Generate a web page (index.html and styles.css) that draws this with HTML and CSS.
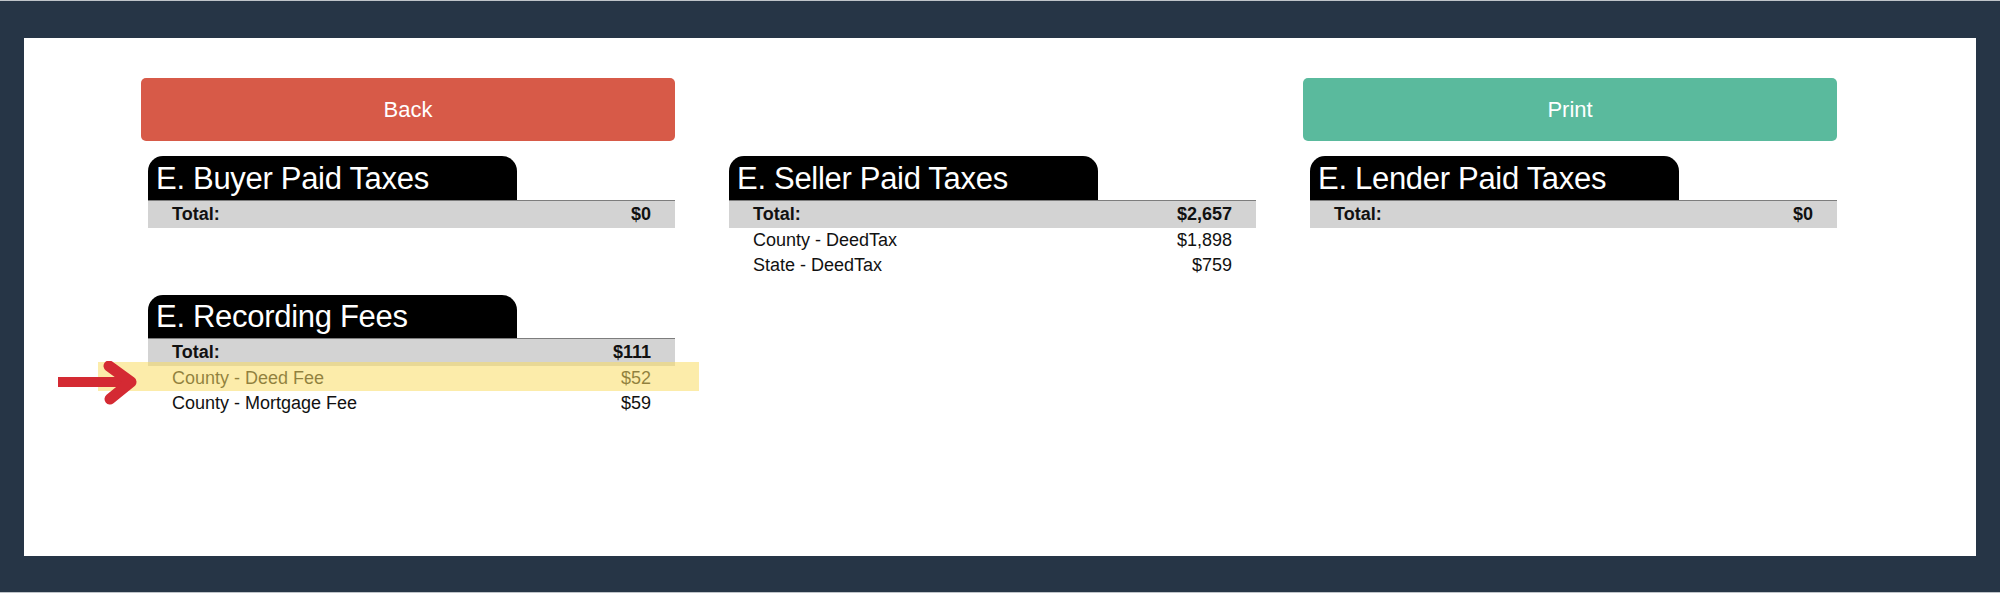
FILE: index.html
```html
<!DOCTYPE html>
<html lang="en">
<head>
<meta charset="utf-8">
<title>Taxes and Recording Fees</title>
<link rel="stylesheet" href="styles.css">
</head>
<body>
<div class="frame">
  <main class="panel">
    <div class="grid">
      <button class="btn btn-back" type="button">Back</button>
      <div class="spacer"></div>
      <button class="btn btn-print" type="button">Print</button>

      <div class="col">
        <section class="fees">
          <h2 class="tab">E. Buyer Paid Taxes</h2>
          <div class="row total"><span>Total:</span><span>$0</span></div>
        </section>
        <section class="fees fees-recording">
          <h2 class="tab">E. Recording Fees</h2>
          <div class="row total"><span>Total:</span><span>$111</span></div>
          <div class="row marked">
            <span>County - Deed Fee</span><span>$52</span>
            <span class="highlight"></span>
            <svg class="pointer" width="80" height="44" viewBox="0 0 80 44" aria-hidden="true">
              <line x1="0" y1="21" x2="70" y2="21" stroke="#d42a33" stroke-width="10"/>
              <polyline points="51,5 73,21 52,38" fill="none" stroke="#d42a33" stroke-width="11" stroke-linecap="round" stroke-linejoin="round"/>
            </svg>
          </div>
          <div class="row"><span>County - Mortgage Fee</span><span>$59</span></div>
        </section>
      </div>

      <div class="col">
        <section class="fees">
          <h2 class="tab">E. Seller Paid Taxes</h2>
          <div class="row total"><span>Total:</span><span>$2,657</span></div>
          <div class="row"><span>County - DeedTax</span><span>$1,898</span></div>
          <div class="row"><span>State - DeedTax</span><span>$759</span></div>
        </section>
      </div>

      <div class="col">
        <section class="fees">
          <h2 class="tab">E. Lender Paid Taxes</h2>
          <div class="row total"><span>Total:</span><span>$0</span></div>
        </section>
      </div>
    </div>
  </main>
</div>
</body>
</html>
```

FILE: styles.css
```css
* {
  box-sizing: border-box;
}

html,
body {
  margin: 0;
  padding: 0;
}

body {
  background: #263546;
  font-family: "Liberation Sans", Arial, sans-serif;
  color: #111;
}

.frame {
  height: 593px;
  border-top: 1px solid #bfc4c9;
  border-bottom: 1px solid #bfc4c9;
  padding: 37px 24px 36px 24px;
}

.panel {
  background: #ffffff;
  height: 518px;
  padding: 40px 0 0 117px;
}

.grid {
  display: grid;
  grid-template-columns: repeat(3, 534px);
  column-gap: 47px;
  row-gap: 15px;
  align-items: start;
}

.btn {
  display: block;
  width: 100%;
  height: 63px;
  border: none;
  border-radius: 5px;
  color: #ffffff;
  font-family: "Liberation Sans", Arial, sans-serif;
  font-size: 22px;
  cursor: pointer;
}

.btn-back {
  background: #d75a48;
}

.btn-print {
  background: #5aba9d;
}

.col {
  display: flex;
  flex-direction: column;
  gap: 67px;
}

.fees {
  margin-left: 7px;
  position: relative;
}

.tab {
  margin: 0;
  width: 70%;
  height: 44px;
  line-height: 45px;
  padding-left: 8px;
  background: #000000;
  color: #ffffff;
  font-size: 31px;
  font-weight: normal;
  letter-spacing: -0.3px;
  border-radius: 15px 15px 0 0;
  white-space: nowrap;
}

.fees-recording .tab {
  height: 43px;
  line-height: 44px;
}

.row {
  display: flex;
  justify-content: space-between;
  padding: 0 24px;
  font-size: 18px;
  line-height: 25px;
  position: relative;
}

.row.total {
  background: #d3d3d3;
  border-top: 1px solid #7d7d7d;
  font-weight: bold;
  line-height: 27px;
}

.highlight {
  position: absolute;
  left: -50px;
  right: -24px;
  top: -4px;
  bottom: 0;
  background: rgba(250, 220, 100, 0.55);
}

.pointer {
  position: absolute;
  left: -90px;
  top: -5px;
}
```
